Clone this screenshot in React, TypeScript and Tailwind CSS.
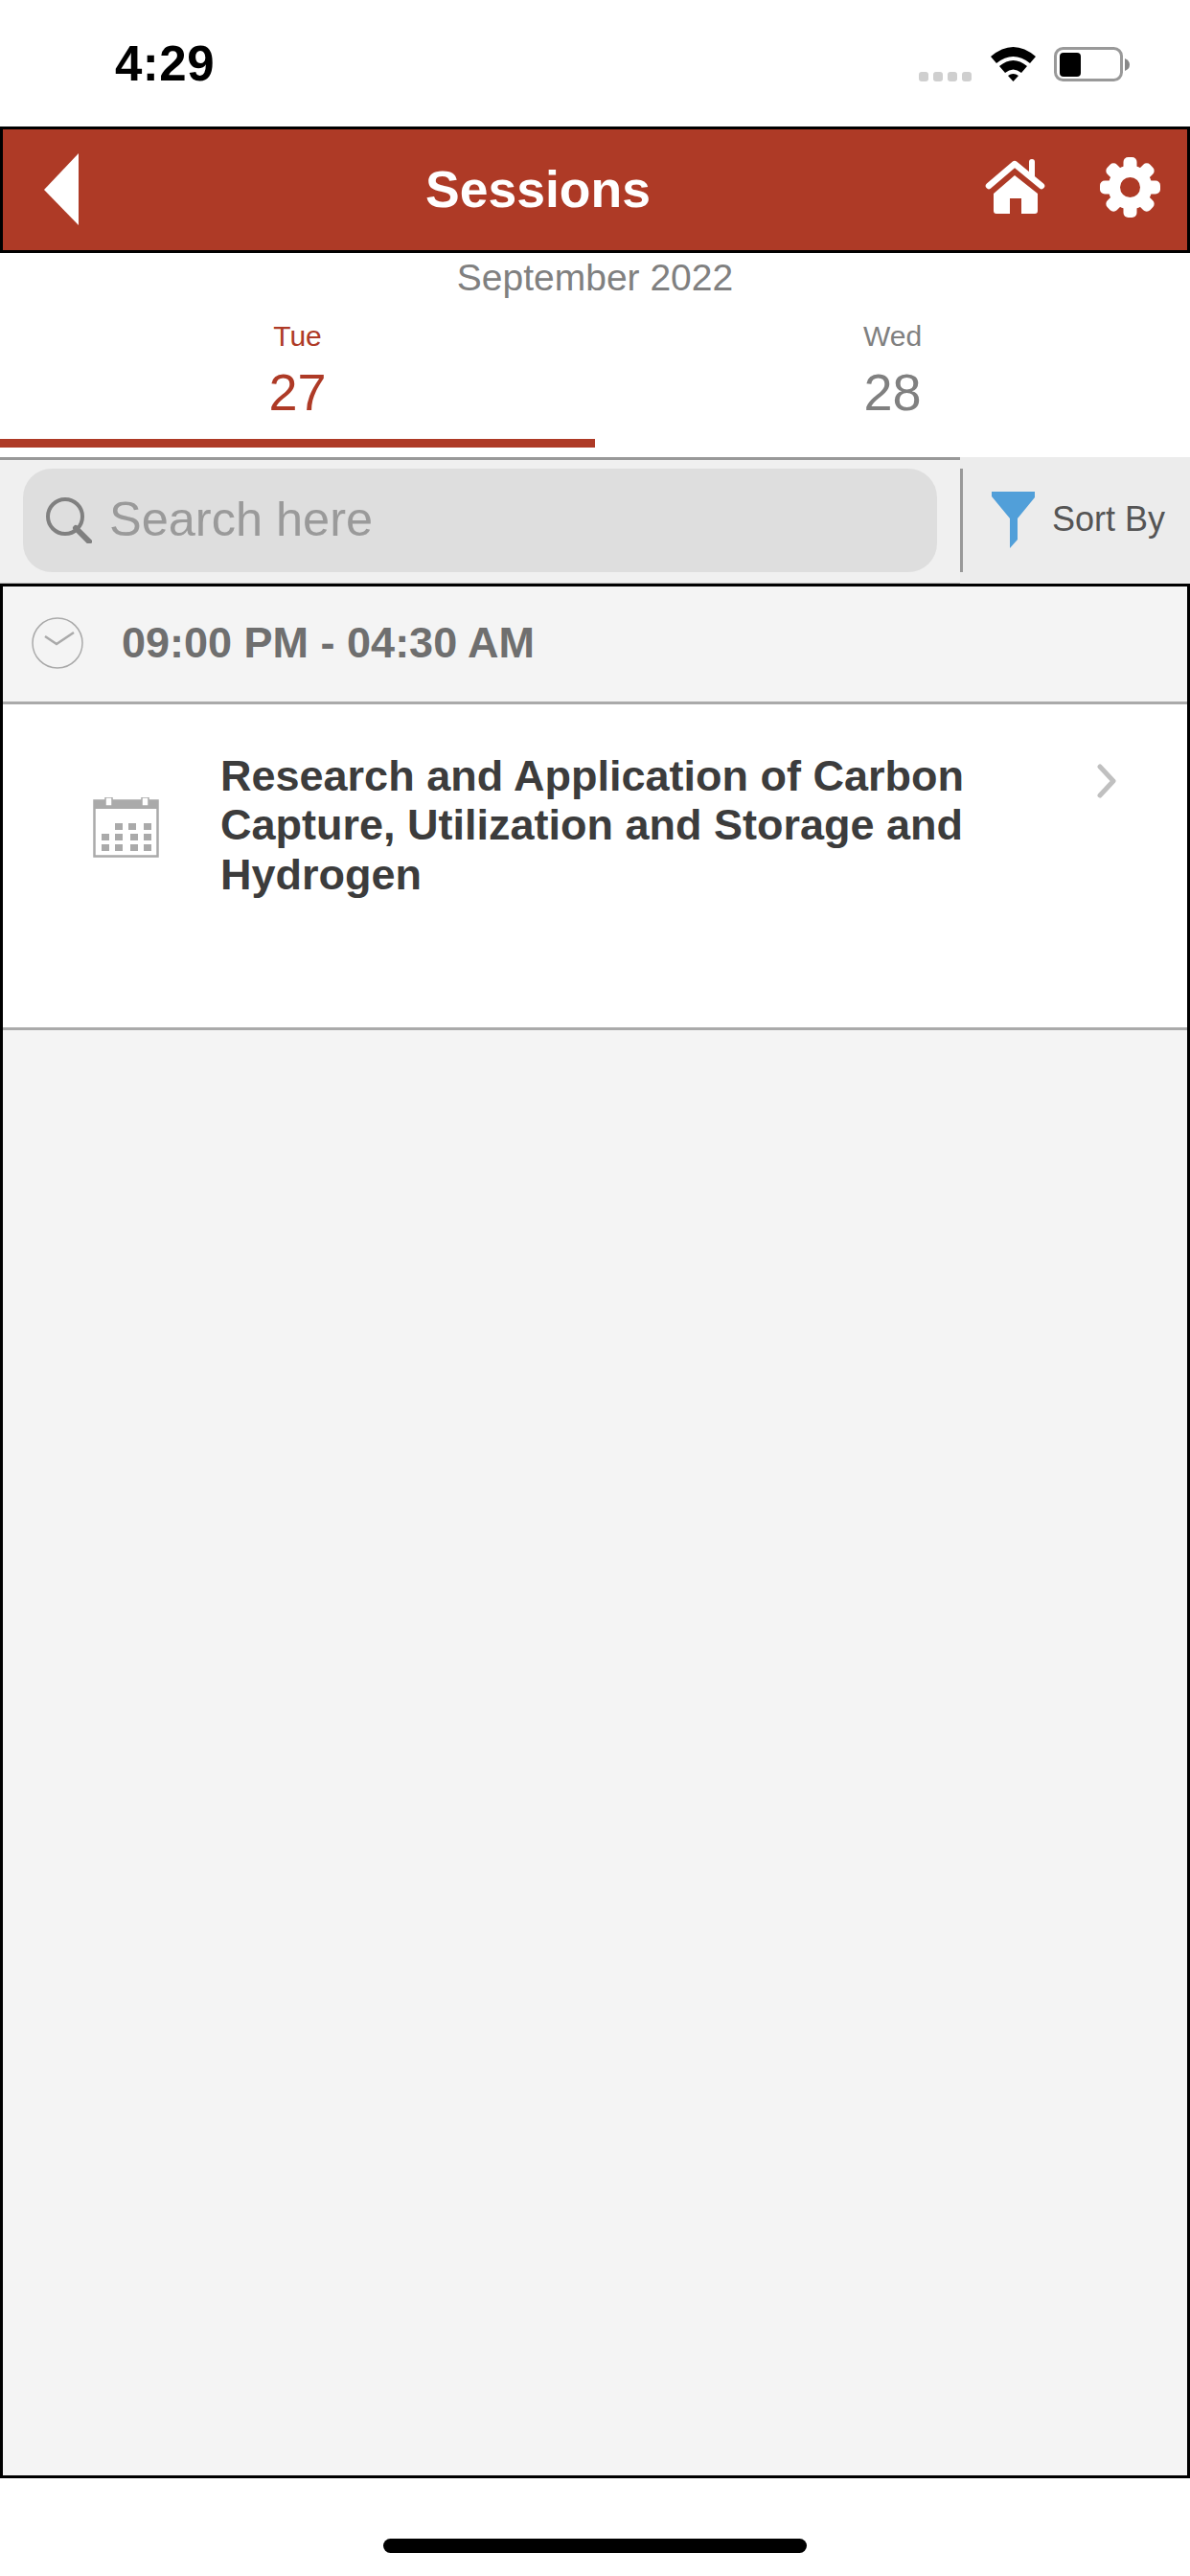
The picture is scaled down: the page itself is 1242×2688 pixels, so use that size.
const font = { fontFamily: '"Liberation Sans", Arial, sans-serif' };

function Wifi() {
  return (
    <svg width="47" height="36" viewBox="0 0 47 36" fill="#000">
      <path d="M0 10 Q23.5 -10 47 10 L41 17 Q23.5 3 6 17Z" />
      <path d="M9 20 Q23.5 8 38 20 L32 27 Q23.5 20 15 27Z" />
      <path d="M18 30 Q23.5 26 29 30 L23.5 36Z" />
    </svg>
  );
}

function Battery() {
  return (
    <svg width="79" height="36" viewBox="0 0 79 36">
      <rect x="1.5" y="1.5" width="69" height="33" rx="8" fill="none" stroke="#999" strokeWidth="3" />
      <rect x="6" y="6" width="22" height="25" rx="4" fill="#000" />
      <path d="M74 12 Q79 14 79 18.500 Q79 23 74 25Z" fill="#888" />
    </svg>
  );
}

function HomeIcon() {
  return (
    <svg width="63" height="58" viewBox="0 0 63 58" fill="#fff">
      <path d="M46 3 a3 3 0 0 1 6 0 V20 H46Z" />
      <path d="M4 28 L31 5 L59 28" fill="none" stroke="#fff" strokeWidth="6.500" strokeLinecap="round" strokeLinejoin="round" />
      <path d="M31 17 L55 36 V54 a3 3 0 0 1 -3 3 H38 V41 H26 V57 H12 a3 3 0 0 1 -3 -3 V36Z" />
    </svg>
  );
}

function GearIcon() {
  const angles = [0, 45, 90, 135, 180, 225, 270, 315];
  return (
    <svg width="63" height="63" viewBox="0 0 63 63">
      <circle cx="31.500" cy="31.500" r="23" fill="#fff" />
      {angles.map((a) => (
        <rect key={a} x="24.500" y="0" width="14" height="16" rx="5" fill="#fff" transform={`rotate(${a} 31.500 31.500)`} />
      ))}
      <circle cx="31.500" cy="31.500" r="10.500" fill="#ae3a26" />
    </svg>
  );
}

function CalendarIcon() {
  const cells = [
    [23, 27], [37, 27], [53, 27],
    [9, 38], [23, 38], [39, 38], [53, 38],
    [9, 49], [23, 49], [39, 49], [53, 49],
  ];
  return (
    <svg width="69" height="63" viewBox="0 0 69 63" fill="#aaa">
      <rect x="1.500" y="3.500" width="66" height="58" fill="#fff" stroke="#aaa" strokeWidth="2.500" />
      <rect x="1" y="3" width="67" height="9" />
      <rect x="13" y="0" width="7" height="9" fill="#fff" stroke="#aaa" strokeWidth="1.500" />
      <rect x="51" y="0" width="7" height="9" fill="#fff" stroke="#aaa" strokeWidth="1.500" />
      {cells.map(([x, y]) => (
        <rect key={`${x}-${y}`} x={x} y={y} width="8" height="7" />
      ))}
    </svg>
  );
}

export default function App() {
  return (
    <div className="w-[1242px] h-[2688px] bg-white flex flex-col overflow-hidden" style={font}>
      {/* Status bar */}
      <div className="h-[132px] shrink-0 relative flex items-start">
        <span className="ml-[120px] mt-[39px] text-[51px] leading-[56px] font-bold text-black tracking-[0.5px]">4:29</span>
        <div className="ml-auto mt-[49px] mr-[63px] flex items-start">
          <div className="mt-[26px] flex gap-[5px]">
            <div className="w-[10px] h-[10px] rounded-[3px] bg-[#cfcfcf]" />
            <div className="w-[10px] h-[10px] rounded-[3px] bg-[#cfcfcf]" />
            <div className="w-[10px] h-[10px] rounded-[3px] bg-[#cfcfcf]" />
            <div className="w-[10px] h-[10px] rounded-[3px] bg-[#cfcfcf]" />
          </div>
          <div className="ml-[20px]"><Wifi /></div>
          <div className="ml-[19px]"><Battery /></div>
        </div>
      </div>

      {/* Header */}
      <div className="h-[132px] shrink-0 bg-[#ae3a26] border-[3px] border-black flex items-center">
        <svg className="ml-[43px] -mt-[2px]" width="36" height="75" viewBox="0 0 36 75" fill="#fff">
          <path d="M36 0 V75 L0 38Z" />
        </svg>
        <span className="ml-[362px] text-[53.500px] leading-[60px] font-bold text-white">Sessions</span>
        <div className="ml-[349px] -mt-[6px]"><HomeIcon /></div>
        <div className="ml-[57px] -mt-[6px]"><GearIcon /></div>
      </div>

      {/* Date tabs */}
      <div className="h-[213px] shrink-0 flex flex-col">
        <div className="mt-[4px] text-center text-[39px] leading-[44px] text-[#808080]">September 2022</div>
        <div className="flex mt-[22px]">
          <div className="w-[621px] flex flex-col items-center">
            <span className="text-[30px] leading-[34px] text-[#ae3a26]">Tue</span>
            <span className="mt-[10px] text-[54px] leading-[62px] text-[#ae3a26]">27</span>
          </div>
          <div className="w-[621px] flex flex-col items-center">
            <span className="text-[30px] leading-[34px] text-[#808080]">Wed</span>
            <span className="mt-[10px] text-[54px] leading-[62px] text-[#808080]">28</span>
          </div>
        </div>
        <div className="w-[621px] h-[9px] mt-[18px] bg-[#ae3a26]" />
      </div>

      {/* Search and sort */}
      <div className="h-[132px] shrink-0 flex bg-[#ececec]">
        <div className="w-[1002px] bg-[#f0f0f0] border-t-[3px] border-t-[#999] border-b border-b-[#bbb] px-[24px] pt-[9px]">
          <div className="w-[954px] h-[108px] rounded-[30px] bg-[#dedede] flex items-center pl-[24px]">
            <svg width="48" height="48" viewBox="0 0 48 48" fill="none" stroke="#808080">
              <circle cx="20" cy="20" r="18" strokeWidth="4" />
              <path d="M31 32 L45 46" strokeWidth="6" strokeLinecap="round" />
            </svg>
            <span className="ml-[18px] -mt-[2px] text-[50.500px] leading-[58px] text-[#9a9a9a]">Search here</span>
          </div>
        </div>
        <div className="w-[3px] h-[108px] mt-[12px] bg-[#999]" />
        <div className="flex items-start">
          <svg className="ml-[30px] mt-[36px]" width="45" height="59" viewBox="0 0 45 59" fill="#519fd9">
            <path d="M0 0 H45 V6 L27 28 V50 L19 59 V28 L0 5Z" />
          </svg>
          <span className="ml-[18px] mt-[44px] text-[36px] leading-[42px] text-[#555]">Sort By</span>
        </div>
      </div>

      {/* Session list */}
      <div className="h-[1977px] shrink-0 bg-[#f4f4f4] border-[3px] border-black flex flex-col">
        <div className="h-[123px] shrink-0 border-b-[3px] border-[#aaa] flex items-center">
          <svg className="ml-[30px] -mt-[3px]" width="54" height="54" viewBox="0 0 54 54" fill="none" stroke="#aaa">
            <circle cx="27" cy="27" r="26" strokeWidth="1.500" />
            <path d="M14 20 L26 28 L44 16" strokeWidth="2.500" />
          </svg>
          <span className="ml-[40px] -mt-[3px] text-[45px] leading-[52px] font-bold text-[#6f6f6f]">09:00 PM - 04:30 AM</span>
        </div>
        <div className="h-[340px] shrink-0 bg-white border-b-[3px] border-[#aaa] flex items-start">
          <div className="ml-[94px] mt-[97px]"><CalendarIcon /></div>
          <div className="ml-[64px] mt-[49px] w-[800px] text-[45px] leading-[51.400px] font-bold text-[#3c3c3c]">
            Research and Application of Carbon Capture, Utilization and Storage and Hydrogen
          </div>
          <svg className="ml-[115px] mt-[62px]" width="20" height="36" viewBox="0 0 20 36" fill="none" stroke="#c0c0c0" strokeWidth="5" strokeLinecap="round" strokeLinejoin="round">
            <path d="M3 3 L17 18 L3 33" />
          </svg>
        </div>
      </div>

      {/* Home indicator */}
      <div className="flex justify-center mt-[63px]">
        <div className="w-[442px] h-[15px] rounded-full bg-black" />
      </div>
    </div>
  );
}
